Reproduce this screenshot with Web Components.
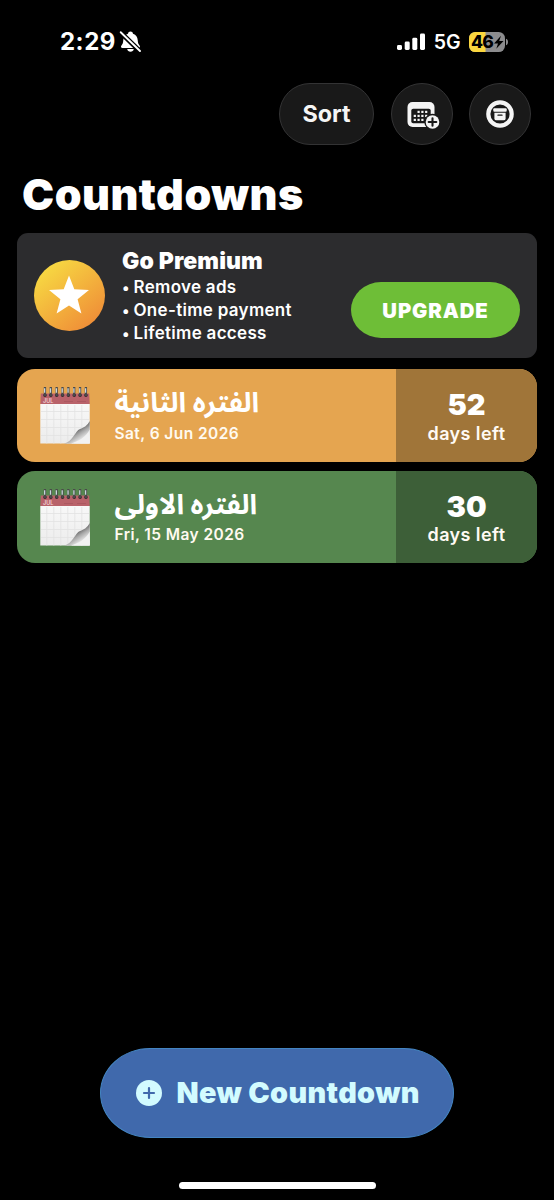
<!DOCTYPE html>
<html lang="en">
<head>
<meta charset="utf-8">
<title>Countdowns</title>
<style>
  html, body { margin: 0; background: #000; }
  body { width: 554px; height: 1200px; overflow: hidden; font-family: Inter, "Liberation Sans", sans-serif; color: #fff; }
</style>
</head>
<body>
<countdown-app></countdown-app>
<script>
const define = (name, html) => {
  const tpl = document.createElement('template');
  tpl.innerHTML = html;
  customElements.define(name, class extends HTMLElement {
    constructor() {
      super();
      this.attachShadow({ mode: 'open' }).append(tpl.content.cloneNode(true));
    }
  });
};

define('status-bar', `
<style>
  :host { display: flex; height: 83px; box-sizing: border-box; padding: 27px 46px 0 60px; justify-content: space-between; align-items: flex-start; }
  .side { display: flex; align-items: center; height: 29px; }
  .time { font: 700 24px/29px Inter, sans-serif; letter-spacing: .5px; }
  .net { font: 600 19.500px/29px Inter, sans-serif; margin: 2px 8.500px 0 9px; }
  svg { display: block; }
</style>
<div class="side">
  <span class="time">2:29</span>
  <svg width="23" height="24" viewBox="0 0 23 24" style="margin-left:3px">
    <path fill="#fff" d="M9 3.700C9.200 2.200 10.200 1.400 11.500 1.400s2.300.8 2.500 2.300C17.200 4.800 18.500 7 18.700 10c.2 3.200.7 4.100 2 5.700.7.900.2 2.300-1.100 2.300H3.400c-1.300 0-1.800-1.400-1.100-2.300C3.600 14.100 4.100 13.200 4.300 10c.2-3 1.500-5.200 4.700-6.300zM8.200 19h6.600c-.3 1.700-1.600 2.700-3.300 2.700S8.500 20.700 8.200 19z"/>
    <path stroke="#000" stroke-width="4.800" d="M1.200 2l20 19.500"/>
    <path stroke="#fff" stroke-width="1.900" stroke-linecap="round" d="M1.700 2.200l19.300 18.800"/>
  </svg>
</div>
<div class="side">
  <svg width="28" height="18" viewBox="0 0 28 18" fill="#fff">
    <rect x="0" y="12" width="5" height="5" rx="1.400"/><rect x="7.700" y="8.600" width="5" height="8.400" rx="1.400"/>
    <rect x="15.300" y="4.800" width="5" height="12.200" rx="1.400"/><rect x="23" y=".5" width="5" height="16.500" rx="1.400"/>
  </svg>
  <span class="net">5G</span>
  <svg width="39" height="20" viewBox="0 0 39 20">
    <defs><clipPath id="b"><rect width="36" height="20" rx="6.300"/></clipPath></defs>
    <g clip-path="url(#b)"><rect width="36" height="20" fill="#8c8c8e"/><rect width="16.500" height="20" fill="#fbd63e"/></g>
    <path fill="#8c8c8e" d="M37 6.800c1.500.6 2 1.800 2 3.200s-.5 2.600-2 3.200z"/>
    <text x="2" y="16.300" font-family="Inter, sans-serif" font-weight="800" font-size="17.500" textLength="22.800" fill="#000">46</text>
    <path fill="#000" d="M32 3.800l-7 7.600h4l-1.700 5.400 7.200-7.900h-4.300z"/>
  </svg>
</div>`);

define('glass-button', `
<style>
  :host { display: flex; align-items: center; justify-content: center; box-sizing: border-box; width: 62px; height: 62px; border-radius: 31px; background: #191919; border: 1px solid #333334; font: 700 23.300px/30px Inter, sans-serif; color: #f5f5f5; }
  :host([wide]) { width: 95px; }
</style><slot></slot>`);

define('tool-bar', `
<style>
  :host { display: flex; justify-content: flex-end; gap: 16.500px; padding-right: 23px; height: 62px; }
  svg { display: block; }
  .cal { margin: 2px 0 0 3px; }
</style>
<glass-button wide>Sort</glass-button>
<glass-button>
  <svg class="cal" width="34" height="30" viewBox="0 0 34 30">
    <rect x="1.500" y="2" width="27" height="25" rx="5" fill="#f5f5f5"/>
    <rect x="5.300" y="8.800" width="19.400" height="14.400" rx="1.800" fill="#191919"/>
    <g fill="#f5f5f5">
      <rect x="11.500" y="10.800" width="2.200" height="2.200"/><rect x="15.300" y="10.800" width="2.200" height="2.200"/><rect x="19.100" y="10.800" width="2.200" height="2.200"/>
      <rect x="7.700" y="14.800" width="2.200" height="2.200"/><rect x="11.500" y="14.800" width="2.200" height="2.200"/><rect x="15.300" y="14.800" width="2.200" height="2.200"/><rect x="19.100" y="14.800" width="2.200" height="2.200"/>
      <rect x="7.700" y="18.800" width="2.200" height="2.200"/><rect x="11.500" y="18.800" width="2.200" height="2.200"/><rect x="15.300" y="18.800" width="2.200" height="2.200"/>
    </g>
    <circle cx="26.500" cy="22" r="8.200" fill="#191919"/><circle cx="26.500" cy="22" r="6.800" fill="#f5f5f5"/>
    <path stroke="#191919" stroke-width="2.100" stroke-linecap="round" d="M22.700 22h7.600M26.500 18.200v7.600"/>
  </svg>
</glass-button>
<glass-button>
  <svg width="28" height="28" viewBox="0 0 28 28">
    <circle cx="14" cy="14" r="11.700" fill="none" stroke="#f5f5f5" stroke-width="4.200"/>
    <rect x="7.300" y="8.300" width="13.400" height="3.400" rx="1" fill="#f5f5f5"/>
    <path fill="#f5f5f5" d="M8.400 12.700h11.200v5.700q0 1.900-1.900 1.900h-7.400q-1.900 0-1.900-1.900z"/>
    <path stroke="#191919" stroke-width="1.300" stroke-linecap="round" d="M12 15.200h4"/>
  </svg>
</glass-button>`);

define('premium-card', `
<style>
  :host { display: flex; box-sizing: border-box; height: 125px; margin: 0 17px; border-radius: 11px; background: #2c2c2e; padding: 0 17px; align-items: flex-start; }
  svg { display: block; margin-top: 27px; }
  .copy { flex: 1; padding: 13px 0 0 17px; }
  h2 { margin: 0; font: 900 23px/30px Inter, sans-serif; letter-spacing: .12px; }
  ul { list-style: none; margin: 0; padding: 0; font: 600 17px/23px Inter, sans-serif; letter-spacing: .3px; }
  li { display: flex; }
  i { font-style: normal; font-size: 15px; width: 11.500px; }
  button { all: unset; box-sizing: border-box; width: 169px; height: 56px; margin-top: 49.500px; border-radius: 30px / 28px; background: #6ebe37; text-align: center; font: 900 20.300px/57px Inter, sans-serif; letter-spacing: .9px; }
</style>
<svg width="71" height="71" viewBox="0 0 71 71">
  <defs><linearGradient id="g" x1=".15" y1=".1" x2=".85" y2=".95"><stop offset="0" stop-color="#f7d942"/><stop offset="1" stop-color="#ef8b37"/></linearGradient></defs>
  <circle cx="35.500" cy="35.500" r="35.500" fill="url(#g)"/>
  <path fill="#fff" d="M35 15.500l5.300 13.700 14.700.8-11.400 9.300 3.800 14.200L35 45.500l-12.400 8 3.800-14.200L15 30l14.700-.8z"/>
</svg>
<div class="copy"><h2>Go Premium</h2>
<ul><li><i>•</i><span>Remove ads</span></li><li><i>•</i><span>One-time payment</span></li><li><i>•</i><span>Lifetime access</span></li></ul></div>
<button>UPGRADE</button>`);

define('calendar-icon', `
<style>:host { display: block; width: 50px; height: 59px; } svg { display: block; }</style>
<svg width="50" height="59" viewBox="0 0 50 59">
  <defs>
    <linearGradient id="p" x1="0" y1="0" x2="0" y2="1"><stop offset="0" stop-color="#f8f8f8"/><stop offset="1" stop-color="#ececec"/></linearGradient>
    <linearGradient id="c" gradientUnits="userSpaceOnUse" x1="34" y1="40" x2="43" y2="54"><stop offset="0" stop-color="#e8e8e8"/><stop offset=".3" stop-color="#6c6c6c"/><stop offset=".55" stop-color="#a8a8a8"/><stop offset="1" stop-color="#f4f4f4"/></linearGradient>
  </defs>
  <rect x=".3" y="18" width="49.400" height="39.500" fill="url(#p)"/>
  <path fill="none" stroke="#e2e2e2" stroke-width=".8" d="M6.800 19v38.500M13.800 19v38.500M20.800 19v38.500M27.800 19v38.500M34.800 19v38.500M41.800 19v38.500M1 25.500h48M1 33.500h48M1 41.500h48M1 49.500h48"/>
  <path fill="url(#c)" d="M24 57.500c9-2 11-12.500 16-14.500 4-1.500 7.500-3.500 9.700-8v22.500z"/>
  <path fill="#f2f2f2" d="M49.700 43.500v14H31c8-2.500 15-6.500 18.700-14z"/>
  <path fill="#b9626a" d="M.8 7.500h48.400l.5 10.500H.3z"/>
  <text x="3" y="17" font-family="Inter, sans-serif" font-size="5.500" font-weight="600" fill="#f0d3d5">JUL</text>
  <path stroke="#ab5860" stroke-width="1.200" d="M24 15.500h9M37 15.500h9"/>
  <path stroke="#35292d" stroke-width="3.600" stroke-linecap="round" stroke-dasharray="0 5.850" d="M5 9.300h41.500"/>
  <path stroke="#4a4a4a" stroke-width="9" stroke-dasharray="2.300 3.550" d="M3.800 5.500h43.500"/>
  <path stroke="#c8d6dc" stroke-width="4.500" stroke-dasharray="1.300 4.550" d="M4 4.600h43.500"/>
</svg>`);

define('countdown-row', `
<style>
  :host { display: flex; height: 92.500px; margin: 0 17px; border-radius: 18px; overflow: hidden; background: var(--main); }
  calendar-icon { margin: 17px 24.500px 0 23px; }
  .info { flex: 1; padding-top: 14px; }
  .name { font: 700 27.800px/38px Inter, "Noto Sans Arabic", "DejaVu Sans Condensed", sans-serif; }
  .date { font: 600 15.500px/22px Inter, sans-serif; letter-spacing: .43px; color: #fffaf0; margin-top: 1.500px; }
  .left { width: 141px; background: var(--side); text-align: center; padding-top: 18px; box-sizing: border-box; }
  .num { font: 900 29px/35px Inter, sans-serif; }
  .unit { font: 600 18px/22px Inter, sans-serif; letter-spacing: .4px; margin-top: .5px; color: #fffaf4; }
</style>
<calendar-icon></calendar-icon>
<div class="info"><div class="name"><slot name="name"></slot></div><div class="date"><slot name="date"></slot></div></div>
<div class="left"><div class="num"><slot name="num"></slot></div><div class="unit">days left</div></div>`);

define('new-button', `
<style>
  :host { display: flex; box-sizing: border-box; width: 354px; height: 90px; border: 1px solid #4485c2; border-radius: 50px / 45px; background: #4069ac; color: #d2fbff; align-items: center; padding-left: 35px; font: 900 28.800px/36px Inter, sans-serif; letter-spacing: .35px; }
  svg { display: block; margin-right: 14.500px; }
</style>
<svg width="26" height="26" viewBox="0 0 26 26"><circle cx="13" cy="13" r="13" fill="#d2fbff"/><path stroke="#4069ac" stroke-width="2.200" stroke-linecap="round" d="M8 13h10M13 8v10"/></svg>
<slot></slot>`);

define('countdown-app', `
<style>
  :host { display: flex; flex-direction: column; width: 554px; height: 1200px; background: #000; }
  h1 { margin: 0; padding: 10.500px 0 0 22px; font: 900 43px/77px Inter, sans-serif; letter-spacing: .5px; }
  .rows { display: flex; flex-direction: column; gap: 9px; margin-top: 11.500px; }
  new-button { margin: auto auto 0; }
  .home { width: 197px; height: 7px; border-radius: 4px; background: #fff; margin: 43.500px auto 11.500px; }
</style>
<status-bar></status-bar>
<tool-bar></tool-bar>
<h1>Countdowns</h1>
<premium-card></premium-card>
<div class="rows">
<countdown-row style="--main:#e5a550;--side:#a07539"><span slot="name">الفتره الثانية</span><span slot="date">Sat, 6 Jun 2026</span><span slot="num">52</span></countdown-row>
<countdown-row style="--main:#56874f;--side:#3d5f38"><span slot="name">الفتره الاولى</span><span slot="date">Fri, 15 May 2026</span><span slot="num">30</span></countdown-row>
</div>
<new-button>New Countdown</new-button>
<div class="home"></div>`);
</script>
</body>
</html>
